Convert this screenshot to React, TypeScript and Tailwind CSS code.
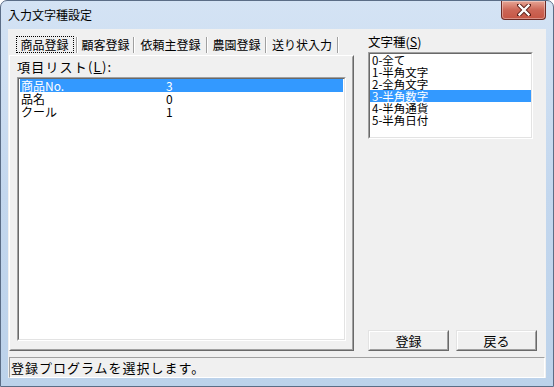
import React from 'react';

const FONT = '"Noto Sans CJK JP", "Noto Sans", sans-serif';

interface TabItem {
  label: string;
  width: string;
  active?: boolean;
}

const TABS: TabItem[] = [
  { label: '商品登録', width: 'w-[63px]', active: true },
  { label: '顧客登録', width: 'w-[55px]' },
  { label: '依頼主登録', width: 'w-[71px]' },
  { label: '農園登録', width: 'w-[57px]' },
  { label: '送り状入力', width: 'w-[70px]' },
];

const ITEMS = [
  { name: '商品No.', value: '3', selected: true },
  { name: '品名', value: '0' },
  { name: 'クール', value: '1' },
];

const KINDS = ['0-全て', '1-半角文字', '2-全角文字', '3-半角数字', '4-半角通貨', '5-半角日付'];

function Sunken({ className, children }: { className: string; children: React.ReactNode }) {
  return (
    <div className={`border border-t-[#a0a0a0] border-l-[#a0a0a0] border-b-white border-r-white ${className}`}>
      <div className="h-full border border-t-[#696969] border-l-[#696969] border-b-[#e3e3e3] border-r-[#e3e3e3] bg-white">
        {children}
      </div>
    </div>
  );
}

function ClassicButton({ label }: { label: string }) {
  return (
    <div className="h-[21px] w-[81px] border border-t-[#e3e3e3] border-l-[#e3e3e3] border-b-[#696969] border-r-[#696969]">
      <div className="flex h-full items-center justify-center border border-t-white border-l-white border-b-[#a0a0a0] border-r-[#a0a0a0] bg-[#f0f0f0] text-[13px] leading-none text-black">
        {label}
      </div>
    </div>
  );
}

function CloseButton() {
  return (
    <div className="flex h-[19px] w-[45px] items-center justify-center rounded-b-[4px] border border-t-0 border-[#6d2b25] bg-gradient-to-b from-[#e6a595] via-[#cc6656] to-[#c65544] shadow-[inset_0_0_0_1px_rgba(255,255,255,0.35)]">
      <svg width="14" height="12" viewBox="0 0 14 12">
        <path d="M2 1 L12 11 M12 1 L2 11" stroke="#5a1f19" strokeWidth="4.2" strokeLinecap="square" />
        <path d="M2.5 1.5 L11.5 10.5 M11.5 1.5 L2.5 10.5" stroke="#ffffff" strokeWidth="2.4" strokeLinecap="square" />
      </svg>
    </div>
  );
}

export default function App() {
  return (
    <div className="bg-white" style={{ fontFamily: FONT }}>
      <div className="flex h-[387px] w-[554px] flex-col overflow-hidden rounded-t-[7px] border border-[#5b6d86] bg-gradient-to-b from-[#d4e3f4] via-[#c3d7ee] to-[#bcd2ea]">
        {/* title bar */}
        <div className="flex h-[28px] items-start">
          <div className="pl-[7px] pt-[7px] text-[12px] leading-[14px] text-black">入力文字種設定</div>
          <div className="ml-auto mr-[7px]">
            <CloseButton />
          </div>
        </div>

        {/* client area */}
        <div className="mx-[7px] flex h-[349px] flex-col bg-[#f0f0f0] text-black">
          <div className="flex h-[328px]">
            {/* left: tabs + page */}
            <div className="ml-[1px] flex w-[345px] flex-col">
              <div className="flex h-[26px] items-end pl-[4px] pb-[2px]">
                {TABS.map((tab) => (
                  <div key={tab.label} className="flex h-[17px] items-center">
                    <div className={`flex h-full ${tab.width} items-center justify-center`}>
                      <div
                        className={`flex h-full items-center px-[2px] text-[12px] leading-none ${
                          tab.active ? 'w-[58px] justify-center border border-dotted border-black' : ''
                        }`}
                      >
                        {tab.label}
                      </div>
                    </div>
                    <div className="flex h-[16px]">
                      <div className="w-[1px] bg-[#a0a0a0]" />
                      <div className="w-[1px] bg-white" />
                    </div>
                  </div>
                ))}
              </div>
              <div className="h-[296px] border border-t-white border-l-white border-b-[#696969] border-r-[#696969]">
                <div className="h-full border border-t-transparent border-l-transparent border-b-[#a0a0a0] border-r-[#a0a0a0] pl-[6px]">
                  <div className="mt-[3px] text-[13px] leading-[14px] tracking-[1.2px]">
                    項目リスト(<span className="underline">L</span>):
                  </div>
                  <Sunken className="mt-[3px] h-[264px] w-[329px]">
                    <div className="px-[1px]">
                      {ITEMS.map((item) => (
                        <div
                          key={item.name}
                          className={`flex h-[13px] text-[12px] leading-[13px] ${
                            item.selected ? 'bg-[#3399ff] text-white' : 'text-black'
                          }`}
                        >
                          <div className="w-[146px] pl-[1px]">{item.name}</div>
                          <div>{item.value}</div>
                        </div>
                      ))}
                    </div>
                  </Sunken>
                </div>
              </div>
            </div>

            {/* right: kinds + buttons */}
            <div className="ml-[14px] flex w-[170px] flex-col pb-[6px]">
              <div className="mt-[6px] text-[12.5px] leading-[14px]">
                文字種(<span className="underline">S</span>)
              </div>
              <Sunken className="mt-[3px] h-[87px] w-[165px]">
                {KINDS.map((kind) => (
                  <div
                    key={kind}
                    className={`h-[12px] pl-[2px] text-[11.5px] leading-[12px] ${
                      kind.startsWith('3') ? 'bg-[#3399ff] text-white' : 'text-black'
                    }`}
                  >
                    {kind}
                  </div>
                ))}
              </Sunken>
              <div className="mt-auto flex gap-[7px]">
                <ClassicButton label="登録" />
                <ClassicButton label="戻る" />
              </div>
            </div>
          </div>

          {/* status bar */}
          <div className="mx-[1px] h-[21px] border border-t-[#a0a0a0] border-l-[#a0a0a0] border-b-white border-r-white pl-[1px] text-[13px] leading-[19px] tracking-[1px]">
            登録プログラムを選択します。
          </div>
        </div>
      </div>
    </div>
  );
}
